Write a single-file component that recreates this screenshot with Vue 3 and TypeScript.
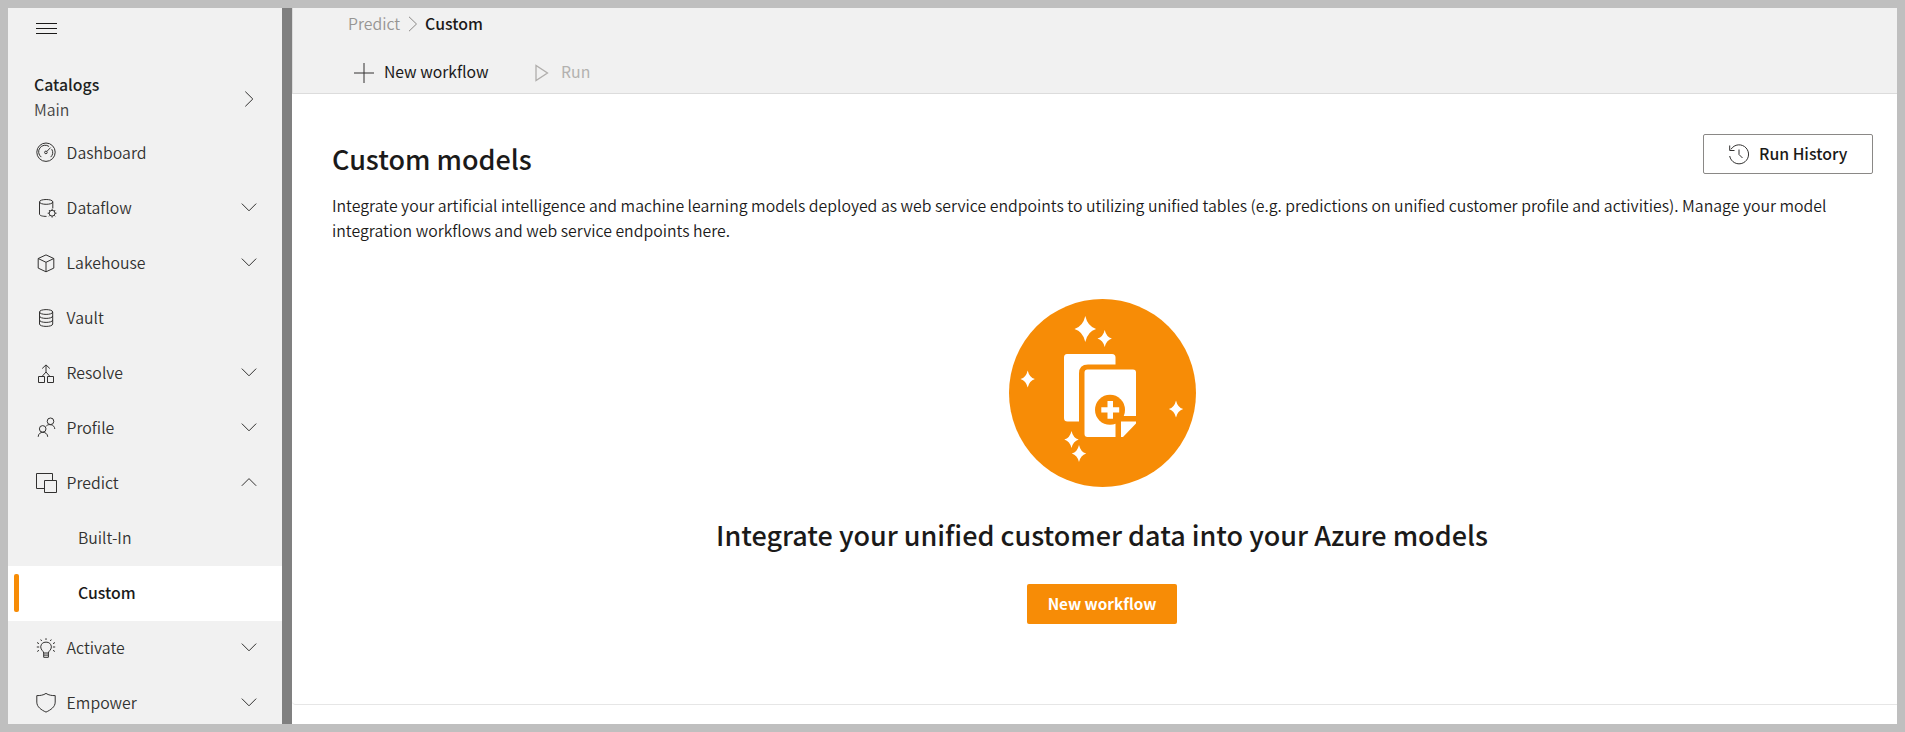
<script setup lang="ts">
interface NavItem {
  label: string
  icon?: string
  arrow?: 'down' | 'up'
  child?: boolean
  active?: boolean
}

const items: NavItem[] = [
  { label: 'Dashboard', icon: 'gauge' },
  { label: 'Dataflow', icon: 'dataflow', arrow: 'down' },
  { label: 'Lakehouse', icon: 'cube', arrow: 'down' },
  { label: 'Vault', icon: 'vault' },
  { label: 'Resolve', icon: 'resolve', arrow: 'down' },
  { label: 'Profile', icon: 'profile', arrow: 'down' },
  { label: 'Predict', icon: 'predict', arrow: 'up' },
  { label: 'Built-In', child: true },
  { label: 'Custom', child: true, active: true },
  { label: 'Activate', icon: 'bulb', arrow: 'down' },
  { label: 'Empower', icon: 'shield', arrow: 'down' },
]

// Outlines on a 22 x 22 grid; dy settles each glyph on the row's optical centre
const icons: Record<string, { d: string; dy: number }> = {
  gauge: {
    dy: 0.2,
    d: 'M20.2 11a9.2 9.2 0 1 1-18.4 0a9.2 9.2 0 0 1 18.4 0M6.3 15.9a6.5 6.5 0 0 1 7.8-10.6M16.7 8a6.5 6.5 0 0 1-1 7.9M12.2 11.2a1.3 1.3 0 1 1-2.6 0a1.3 1.3 0 0 1 2.6 0M11.9 10.2L15.6 6.4',
  },
  dataflow: {
    dy: 1.4,
    d: 'M17.8 4.5c0 3.2-13.3 3.2-13.3 0s13.3-3.2 13.3 0v6.5M4.5 4.5v12.2c0 1.5 3 2.3 7 2.3M20 15.8a2.9 2.9 0 1 1-5.8 0a2.9 2.9 0 0 1 5.8 0M17.1 12.9v-1.5M17.1 18.7v1.5M14.2 15.8h-1.5M20 15.8h1.5M15 13.7l-1-1M19.2 13.7l1-1M15 17.9l-1 1M19.2 17.9l1 1',
  },
  cube: { dy: 1.5, d: 'M11 2.4L18.8 6v9.6L11 19.3L3.2 15.6V6ZM3.2 6L11 9.8L18.8 6M11 9.8v9.5' },
  vault: {
    dy: 1,
    d: 'M17.7 5c0 3.2-13.2 3.2-13.2 0s13.2-3.2 13.2 0v12c0 3.2-13.2 3.2-13.2 0V5M4.5 9c0 3.2 13.2 3.2 13.2 0M4.5 13c0 3.2 13.2 3.2 13.2 0',
  },
  resolve: {
    dy: 1.5,
    d: 'M3.5 14h6v6h-6zM12.5 14h6v6h-6zM7 14L11 9.5L15 14M11 9.5V2.5M7.2 6L11 2.4L14.8 6',
  },
  profile: {
    dy: 0.3,
    d: 'M11 12.6a3.3 3.3 0 1 1-6.6 0a3.3 3.3 0 0 1 6.6 0M3.2 20.5c0-6 9.3-6 9.5 0M18.8 5a3.3 3.3 0 1 1-6.6 0a3.3 3.3 0 0 1 6.6 0M11.3 9.7c2.2-2.6 8.3-1.6 8.5 3',
  },
  predict: { dy: 0, d: 'M9.5 17.5H1.5V2.5H17.5V9.5M9.5 9.5H21.5V21.5H9.5z' },
  bulb: {
    dy: 1.5,
    d: 'M8.7 15.5c0-2-3-2.8-3-6.2a5.4 5.4 0 0 1 10.7 0c0 3.4-3 4.2-3 6.2zM8.7 15.5v4.3h4.7v-4.3M8.7 17.6h4.7M11 2.5V.7M6.7 3.5L5.7 2M15.3 3.5l1-1.5M4 6.2L2 5M18 6.2L20 5M4.2 9.5H1.8M17.9 9.5h2.3M4 12.8L2.2 14M18 12.8l1.9 1.2',
  },
  shield: {
    dy: 0.4,
    d: 'M11 2c2.6 1.8 6 2.3 9.2 2.2v6.5c0 4.8-4.5 7.9-9.2 10c-4.7-2.1-9.2-5.2-9.2-10V4.2C5 4.3 8.4 3.8 11 2z',
  },
}

// x, y, scale of each four-point sparkle
const sparkles = [
  { x: 105.3, y: 49, s: 1.5 },
  { x: 124.7, y: 58.5, s: 1 },
  { x: 47.7, y: 99, s: 1 },
  { x: 196, y: 129, s: 1 },
  { x: 91.5, y: 159.5, s: 1 },
  { x: 99, y: 173.5, s: 1 },
]
</script>

<template>
  <div class="frame">
    <aside class="side">
      <div class="burger"><i /><i /><i /></div>
      <div class="catalog">
        <div>
          <div class="cat-title">Catalogs</div>
          <div class="cat-name">Main</div>
        </div>
        <svg class="cat-arrow" width="16" height="16" viewBox="0 0 16 16"><path d="M4.3 .6L11.8 8L4.3 15.4" /></svg>
      </div>
      <nav>
        <div v-for="item in items" :key="item.label" class="row" :class="{ child: item.child, active: item.active }">
          <svg v-if="item.icon" class="icon" width="22" height="22" viewBox="0 0 22 22">
            <path :transform="`translate(0 ${icons[item.icon].dy})`" :d="icons[item.icon].d" />
          </svg>
          <span class="label">{{ item.label }}</span>
          <svg v-if="item.arrow" class="arrow" width="16" height="10" viewBox="0 0 16 10">
            <path :d="item.arrow === 'down' ? 'M.8 1.6L8 8.8L15.2 1.6' : 'M.8 8.8L8 1.6L15.2 8.8'" />
          </svg>
        </div>
      </nav>
    </aside>
    <div class="splitter" />
    <main class="main">
      <header class="top">
        <div class="crumbs">
          <span class="crumb">Predict</span>
          <svg width="10" height="16" viewBox="0 0 10 16"><path d="M1 .8L8.5 8L1 15.2" /></svg>
          <span class="current">Custom</span>
        </div>
        <div class="commands">
          <svg class="plus" width="20" height="20" viewBox="0 0 20 20"><path d="M10 0V20M0 10H20" /></svg>
          <span class="cmd-new">New workflow</span>
          <svg class="play" width="14" height="18" viewBox="0 0 14 18"><path d="M1 1.5V16.5L12.5 9Z" /></svg>
          <span class="cmd-run">Run</span>
        </div>
      </header>
      <section class="content">
        <div class="heading">
          <h1>Custom models</h1>
          <button class="history" type="button">
            <svg width="22" height="22" viewBox="0 0 22 22">
              <path d="M3 6.3A9.5 9.5 0 1 1 1.7 13M1.7 2.5V7.5H6.5M11 6.5V11.5L14.5 15" />
            </svg>
            <span>Run History</span>
          </button>
        </div>
        <p class="desc">
          <span>Integrate your artificial intelligence and machine learning models deployed as web service endpoints to utilizing unified tables (e.g. predictions on unified customer profile and activities). Manage your model</span><br />
          <span>integration workflows and web service endpoints here.</span>
        </p>
        <div class="empty">
          <svg class="art" width="188" height="188" viewBox="28 19 188 188">
            <ellipse cx="122.5" cy="113" rx="93.5" ry="94" fill="#f78c06" />
            <g fill="#fff">
              <path
                v-for="(p, i) in sparkles"
                :key="i"
                :transform="`translate(${p.x} ${p.y}) scale(${p.s})`"
                d="M0-8.6Q1.6-1.6 7.2 0Q1.6 1.6 0 8.6Q-1.6 1.6-7.2 0Q-1.6-1.6 0-8.6Z"
              />
              <path d="M87 74H132q3.5 0 3.5 3.5V84.5H108q-9 0-9 9V141.500H87.500q-3.500 0-3.500-3.500V77.500q0-3.500 3-3.500z" />
              <path d="M107.500 89.500H153q3 0 3 3V136H135.500V157H107.500q-3 0-3-3V92.500q0-3 3-3z" />
            </g>
            <circle cx="130" cy="129.800" r="15" fill="#f78c06" />
            <path d="M127.500 121h5.500v6.200h6.200v5.300h-6.200v6.300h-5.500v-6.300h-6.200v-5.300h6.200zM141 141.500H156V143.500L143 157H141z" fill="#fff" />
          </svg>
          <h2>Integrate your unified customer data into your Azure models</h2>
          <button class="primary" type="button"><span>New workflow</span></button>
        </div>
      </section>
    </main>
  </div>
</template>

<style>
body {
  background: #bfbfbf;
  overflow: hidden;
}
</style>

<style scoped>
* {
  box-sizing: border-box;
}
.frame {
  width: 1905px;
  height: 732px;
  border: 8px solid #bfbfbf;
  display: flex;
  overflow: hidden;
  background: #fff;
  color: #1b1a19;
  font-family: "Noto Sans CJK SC", "Noto Sans", sans-serif;
  font-size: 15.84px;
  white-space: nowrap;
}
.side {
  width: 274px;
  flex: none;
  height: 716px;
  overflow: hidden;
  background: #f1f1f1;
  color: #323130;
}
.burger {
  display: flex;
  flex-direction: column;
  gap: 4px;
  padding: 15px 0 0 28px;
  height: 65px;
}
.burger i {
  width: 21px;
  height: 1px;
  background: #1b1a19;
}
.catalog {
  height: 53px;
  padding: 0 25px 5px 26px;
  display: flex;
  justify-content: space-between;
  align-items: center;
  line-height: 25px;
}
.cat-title {
  font-weight: 500;
  color: #201f1e;
}
.cat-name {
  color: #444;
  font-weight: 350;
}
.cat-arrow,
.arrow,
.icon {
  fill: none;
  stroke: #323130;
  stroke-width: 1;
  flex: none;
}
.cat-arrow {
  margin-top: 4px;
}
.row {
  height: 55px;
  display: flex;
  align-items: center;
  padding: 0 25px 0 27px;
  font-weight: 350;
}
.icon {
  margin: -3px 9.6px 0 0;
  overflow: visible;
}
.label {
  flex: 1;
  padding-bottom: 3px;
}
.arrow {
  margin-top: -3px;
}
.child {
  padding-left: 70px;
}
.active {
  background: #fff;
  color: #1b1a19;
  font-weight: 500;
  padding-left: 6px;
}
.active::before {
  content: "";
  width: 5px;
  height: 38px;
  margin: -1px 59px 0 0;
  border-radius: 2px;
  background: #f78c06;
}
.splitter {
  width: 10px;
  flex: none;
  background: #808080;
}
.main {
  flex: 1;
  min-width: 0;
}
.top {
  height: 86px;
  background: #f1f1f1;
  border-bottom: 1px solid #dcdcdc;
  border-left: 1px solid #dcdcdc;
}
.crumbs {
  height: 32px;
  display: flex;
  align-items: center;
  padding-left: 55px;
}
.crumbs span {
  line-height: 24px;
}
.crumbs svg {
  fill: none;
  stroke: #8a8886;
  margin: 0 7px 0 8px;
}
.crumb {
  color: #979593;
  font-weight: 350;
}
.current {
  font-weight: 500;
}
.commands {
  height: 53px;
  display: flex;
  align-items: center;
  padding: 12px 0 0 61px;
}
.commands span {
  padding-bottom: 2px;
}
.plus {
  stroke: #323130;
  margin-right: 10px;
}
.cmd-new {
  width: 151px;
  font-size: 15.7px;
}
.play {
  fill: none;
  stroke: #b0aeac;
  stroke-width: 1.3;
  margin-right: 12px;
}
.cmd-run {
  color: #b3b1af;
}
.content {
  height: 611px;
  border-bottom: 1px solid #e6e6e6;
  border-bottom-left-radius: 4px;
  padding: 40px 24px 0 40px;
}
.heading {
  display: flex;
  justify-content: space-between;
  height: 60px;
}
h1,
h2 {
  margin: 0;
  font-weight: 500;
  font-size: 26.97px;
  line-height: 36px;
}
h1 {
  padding-top: 7px;
}
.history {
  width: 170px;
  height: 40px;
  border: 1px solid #8a8886;
  border-radius: 2px;
  background: #fff;
  display: flex;
  align-items: center;
  padding: 0 0 0 24px;
  font: inherit;
  font-weight: 500;
  color: #1b1a19;
}
.history span {
  padding-bottom: 2px;
}
.history svg {
  fill: none;
  stroke: #323130;
  margin-right: 9px;
}
.desc {
  margin: -1px 0 0;
  line-height: 25px;
  font-weight: 350;
}
.empty {
  display: flex;
  flex-direction: column;
  align-items: center;
  margin: 56px 1px 0 0;
}
h2 {
  margin: 30px 0 31px;
}
.primary {
  width: 150px;
  height: 40px;
  border: 0;
  border-radius: 2px;
  background: #f78c06;
  color: #fff;
  font: inherit;
  font-size: 15.3px;
  font-weight: 700;
}
.primary span {
  display: block;
  padding-bottom: 2px;
}
</style>
